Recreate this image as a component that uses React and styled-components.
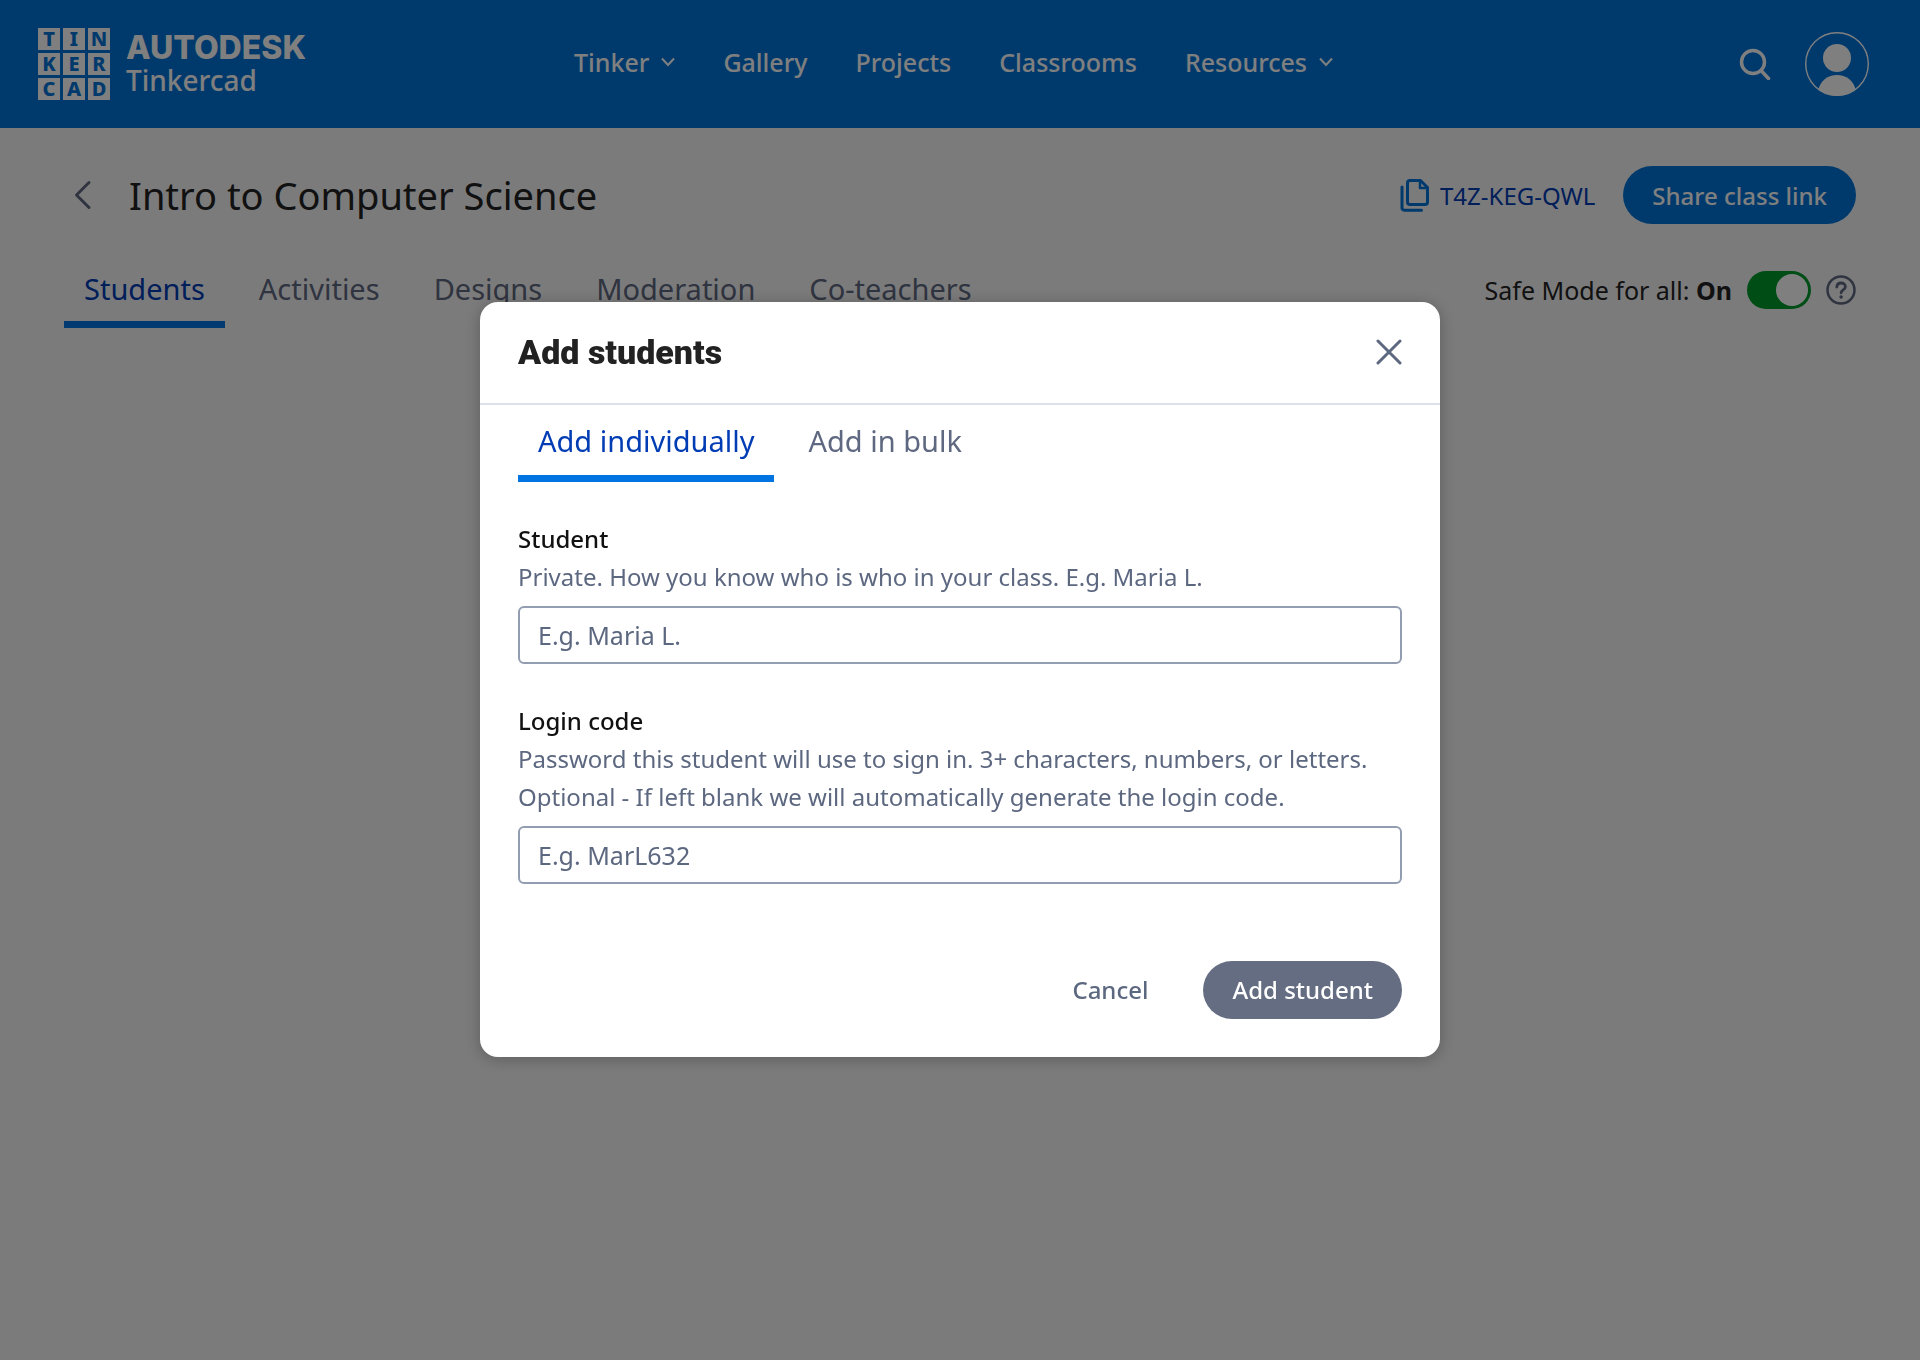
import React from 'react';
import { useState } from 'react';
import styled, { createGlobalStyle } from 'styled-components';

const GlobalStyle = createGlobalStyle`
  * {
    box-sizing: border-box;
  }

  body {
    margin: 0;
    background-color: #f7f7f9;
    color: #222222;
    font-family: 'Noto Sans', 'Open Sans', sans-serif;
    font-size: 24px;
  }

  button,
  input {
    font: inherit;
  }

  button {
    padding: 0;
    border: none;
    background: none;
    cursor: pointer;
  }

  h1,
  h2,
  p {
    margin: 0;
  }

  svg {
    display: block;
    flex: none;
  }
`;

const Page = styled.div`
  min-height: 100vh;
`;

const TopBar = styled.header`
  display: grid;
  grid-template-columns: 1fr auto 1fr;
  align-items: center;
  height: 128px;
  padding: 0 51px 0 38px;
  background-color: #0074da;
  color: #ffffff;
`;

const Brand = styled.a`
  display: flex;
  align-items: center;
  justify-self: start;
  gap: 16px;
  color: inherit;
  text-decoration: none;
`;

const LogoGrid = styled.div`
  display: grid;
  grid-template-columns: repeat(3, 22px);
  gap: 3px;
`;

const LogoTile = styled.span`
  height: 22px;
  background-color: #ffffff;
  color: #0074da;
  font-size: 20px;
  font-weight: 800;
  line-height: 22px;
  text-align: center;
`;

const BrandText = styled.div`
  display: flex;
  flex-direction: column;
`;

const Company = styled.span`
  font-family: Inter, sans-serif;
  font-size: 32px;
  font-weight: 800;
  line-height: 32px;
`;

const Product = styled.span`
  font-size: 28px;
  font-weight: 500;
  line-height: 32px;
`;

const Nav = styled.nav`
  display: flex;
  align-items: center;
  gap: 48px;
  padding-bottom: 4px;
`;

const NavLink = styled.a`
  display: flex;
  align-items: center;
  gap: 12px;
  color: inherit;
  font-size: 25px;
  font-weight: 500;
  text-decoration: none;
`;

const UserTools = styled.div`
  display: flex;
  align-items: center;
  justify-self: end;
  gap: 34px;
`;

const IconButton = styled.button`
  display: flex;
  color: ${props => props.$color || 'inherit'};
`;

const Main = styled.main`
  padding: 38px 64px 0;
`;

const Row = styled.div`
  display: flex;
  align-items: center;
  justify-content: space-between;
`;

const TitleGroup = styled.div`
  display: flex;
  align-items: center;
  gap: 37px;
  padding-left: 10px;
`;

const ClassTitle = styled.h1`
  font-size: 38px;
  font-weight: 400;
  line-height: 56px;
`;

const ClassActions = styled.div`
  display: flex;
  align-items: center;
  gap: 28px;
`;

const ClassCode = styled.button`
  display: flex;
  align-items: center;
  gap: 10px;
  color: #003cb4;
`;

const PillButton = styled.button`
  height: 58px;
  padding: 0 29px;
  border-radius: 29px;
  background-color: ${props => props.$color};
  color: #ffffff;
  font-weight: 500;
`;

const ClassTabsRow = styled(Row)`
  align-items: flex-start;
  margin-top: 38px;
`;

const TabList = styled.div`
  display: flex;
  gap: 14px;
`;

const Tab = styled.button`
  height: ${props => (props.$compact ? '66px' : '77px')};
  padding: ${props => (props.$compact ? '0 20px 6px' : '2px 20px 0')};
  border-bottom: 7px solid ${props => (props.$active ? '#0074e0' : 'transparent')};
  color: ${props => (props.$active ? '#003cb4' : '#5e6880')};
  font-size: 29px;
`;

const SafeMode = styled.div`
  display: flex;
  align-items: center;
  gap: 15px;
  height: 56px;
`;

const SafeModeLabel = styled.label`
  font-size: 25px;
`;

const Switch = styled.input`
  display: flex;
  align-items: center;
  width: 64px;
  height: 38px;
  margin: 0;
  padding: 0 3px;
  border-radius: 19px;
  background-color: ${props => (props.checked ? '#009a2c' : '#8d97aa')};
  appearance: none;
  cursor: pointer;

  &::before {
    content: '';
    width: 32px;
    height: 32px;
    margin-left: ${props => (props.checked ? 'auto' : '0')};
    border-radius: 50%;
    background-color: #ffffff;
  }
`;

const Overlay = styled.div`
  position: fixed;
  inset: 0;
  display: flex;
  align-items: center;
  justify-content: center;
  padding-bottom: 2px;
  background-color: rgba(0, 0, 0, 0.5);
`;

const Dialog = styled.section`
  width: 50%;
  min-width: 900px;
  border-radius: 18px;
  background-color: #ffffff;
  box-shadow: 0 2px 16px rgba(0, 0, 0, 0.25);
`;

const DialogHeader = styled.div`
  display: flex;
  align-items: center;
  justify-content: space-between;
  height: 103px;
  padding: 0 38px;
  border-bottom: 2px solid #dfe1e8;
`;

const DialogTitle = styled.h2`
  font-family: Roboto, sans-serif;
  font-size: 34px;
  font-weight: 900;
`;

const DialogBody = styled.form`
  padding: 0 38px 38px;
`;

const Field = styled.div`
  display: flex;
  flex-direction: column;
  margin-top: 38px;
`;

const FieldLabel = styled.label`
  color: #111111;
  font-weight: 500;
  line-height: 38px;
`;

const Hint = styled.p`
  margin-bottom: 10px;
  color: #5c6780;
  line-height: 38px;
`;

const TextInput = styled.input`
  width: 100%;
  height: 58px;
  padding: 0 18px;
  border: 2px solid #929db2;
  border-radius: 6px;
  background-color: #ffffff;
  color: #222222;
  font-size: 25px;

  &::placeholder {
    color: #5c6780;
    opacity: 1;
  }
`;

const DialogActions = styled.div`
  display: flex;
  align-items: center;
  justify-content: flex-end;
  gap: 55px;
  margin-top: 77px;
`;

const CancelButton = styled.button`
  color: #5c6780;
  font-weight: 500;
`;

const ChevronDown = () => (
  <svg width="14" height="10" viewBox="0 0 14 10" fill="none" stroke="currentColor" strokeWidth="2">
    <path d="M1 1.5 7 8l6-6.5" />
  </svg>
);

const SearchIcon = () => (
  <svg width="32" height="32" viewBox="0 0 32 32" fill="none" stroke="currentColor" strokeWidth="3.5" strokeLinecap="round">
    <circle cx="14" cy="14" r="11.5" />
    <path d="m22 22.5 7.5 8" />
  </svg>
);

const AvatarIcon = () => (
  <svg width="64" height="64" viewBox="0 0 64 64">
    <circle cx="32" cy="32" r="31.3" fill="none" stroke="currentColor" strokeWidth="1.4" />
    <circle cx="32" cy="26" r="14" fill="currentColor" />
    <path d="M13.5 57.5C15 49 23 43 32 43s17 6 18.5 14.5A32 32 0 0 1 32 64a32 32 0 0 1-18.500-6.500Z" fill="currentColor" />
  </svg>
);

const BackIcon = () => (
  <svg width="18" height="30" viewBox="0 0 18 30" fill="none" stroke="currentColor" strokeWidth="3" strokeLinecap="round" strokeLinejoin="round">
    <path d="M15 2.5 2.5 15 15 27.5" />
  </svg>
);

const CopyIcon = () => (
  <svg width="30" height="34" viewBox="0 0 30 34" fill="none" stroke="#0074da" strokeWidth="3" strokeLinecap="round" strokeLinejoin="round">
    <path d="M10 2.5h10.500l7 7V24a2.500 2.500 0 0 1-2.500 2.500H10A2.500 2.500 0 0 1 7.500 24V5A2.500 2.500 0 0 1 10 2.500Z" />
    <path d="M20 3v7h7" strokeWidth="2.5" />
    <path d="M2 9v21a2.200 2.200 0 0 0 2.200 2.200H21.500" />
  </svg>
);

const HelpIcon = () => (
  <svg width="30" height="30" viewBox="0 0 30 30" fill="none" stroke="currentColor" strokeWidth="2.5" strokeLinecap="round">
    <circle cx="15" cy="15" r="13.5" />
    <path d="M10.800 12c.2-2.500 1.900-4 4.300-4s4.300 1.500 4.300 3.800c0 3-4.300 3.200-4.300 6" strokeWidth="2.8" />
    <circle cx="15.1" cy="22" r="1" strokeWidth="1.5" fill="currentColor" />
  </svg>
);

const CloseIcon = () => (
  <svg width="26" height="26" viewBox="0 0 26 26" fill="none" stroke="currentColor" strokeWidth="3" strokeLinecap="round">
    <path d="m2 2 22 22M24 2 2 24" />
  </svg>
);

const navItems = [
  { label: 'Tinker', menu: true },
  { label: 'Gallery' },
  { label: 'Projects' },
  { label: 'Classrooms' },
  { label: 'Resources', menu: true },
];

const classTabs = ['Students', 'Activities', 'Designs', 'Moderation', 'Co-teachers'];
const dialogTabs = ['Add individually', 'Add in bulk'];

const App = () => {
  const [classTab, setClassTab] = useState('Students');
  const [dialogTab, setDialogTab] = useState('Add individually');
  const [safeMode, setSafeMode] = useState(true);
  const [student, setStudent] = useState('');
  const [loginCode, setLoginCode] = useState('');

  return (
    <Page>
      <GlobalStyle />
      <TopBar>
        <Brand href="#">
          <LogoGrid>
            {'TINKERCAD'.split('').map((letter, i) => (
              <LogoTile key={i}>{letter}</LogoTile>
            ))}
          </LogoGrid>
          <BrandText>
            <Company>AUTODESK</Company>
            <Product>Tinkercad</Product>
          </BrandText>
        </Brand>
        <Nav>
          {navItems.map((item) => (
            <NavLink key={item.label} href="#">
              {item.label}
              {item.menu && <ChevronDown />}
            </NavLink>
          ))}
        </Nav>
        <UserTools>
          <IconButton aria-label="Search"><SearchIcon /></IconButton>
          <IconButton aria-label="Account"><AvatarIcon /></IconButton>
        </UserTools>
      </TopBar>

      <Main>
        <Row>
          <TitleGroup>
            <IconButton aria-label="Back" $color="#5e6880"><BackIcon /></IconButton>
            <ClassTitle>Intro to Computer Science</ClassTitle>
          </TitleGroup>
          <ClassActions>
            <ClassCode>
              <CopyIcon />
              T4Z-KEG-QWL
            </ClassCode>
            <PillButton $color="#0074da">Share class link</PillButton>
          </ClassActions>
        </Row>

        <ClassTabsRow>
          <TabList role="tablist">
            {classTabs.map((tab) => (
              <Tab
                key={tab}
                role="tab"
                $compact
                $active={tab === classTab}
                onClick={() => setClassTab(tab)}
              >
                {tab}
              </Tab>
            ))}
          </TabList>
          <SafeMode>
            <SafeModeLabel htmlFor="safe-mode">
              Safe Mode for all: <b>{safeMode ? 'On' : 'Off'}</b>
            </SafeModeLabel>
            <Switch
              id="safe-mode"
              type="checkbox"
              checked={safeMode}
              onChange={(e) => setSafeMode(e.target.checked)}
            />
            <IconButton aria-label="About Safe Mode" $color="#5e6880"><HelpIcon /></IconButton>
          </SafeMode>
        </ClassTabsRow>
      </Main>

      <Overlay>
        <Dialog role="dialog" aria-modal="true" aria-labelledby="dialog-title">
          <DialogHeader>
            <DialogTitle id="dialog-title">Add students</DialogTitle>
            <IconButton aria-label="Close" $color="#5c6780"><CloseIcon /></IconButton>
          </DialogHeader>
          <DialogBody onSubmit={(e) => e.preventDefault()}>
            <TabList role="tablist">
              {dialogTabs.map((tab) => (
                <Tab
                  key={tab}
                  type="button"
                  role="tab"
                  $active={tab === dialogTab}
                  onClick={() => setDialogTab(tab)}
                >
                  {tab}
                </Tab>
              ))}
            </TabList>

            <Field>
              <FieldLabel htmlFor="student">Student</FieldLabel>
              <Hint>Private. How you know who is who in your class. E.g. Maria L.</Hint>
              <TextInput
                id="student"
                type="text"
                placeholder="E.g. Maria L."
                value={student}
                onChange={(e) => setStudent(e.target.value)}
              />
            </Field>

            <Field>
              <FieldLabel htmlFor="login-code">Login code</FieldLabel>
              <Hint>
                Password this student will use to sign in. 3+ characters, numbers, or letters.
                <br />
                Optional - If left blank we will automatically generate the login code.
              </Hint>
              <TextInput
                id="login-code"
                type="text"
                placeholder="E.g. MarL632"
                value={loginCode}
                onChange={(e) => setLoginCode(e.target.value)}
              />
            </Field>

            <DialogActions>
              <CancelButton type="button">Cancel</CancelButton>
              <PillButton type="submit" $color="#656d82">Add student</PillButton>
            </DialogActions>
          </DialogBody>
        </Dialog>
      </Overlay>
    </Page>
  );
};

export default App;
